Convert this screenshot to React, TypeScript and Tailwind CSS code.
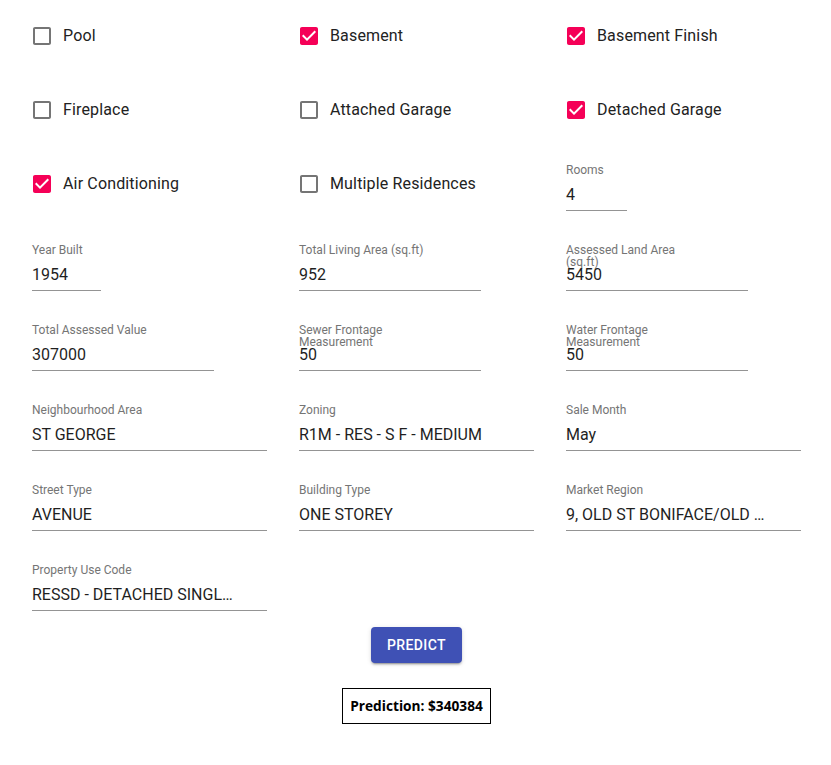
import React from "react";

const CHECKED =
  "M19 3H5c-1.11 0-2 .9-2 2v14c0 1.1.89 2 2 2h14c1.11 0 2-.9 2-2V5c0-1.1-.89-2-2-2zm-9 14l-5-5 1.41-1.41L10 14.17l7.59-7.59L19 8l-9 9z";
const BLANK =
  "M19 5v14H5V5h14m0-2H5c-1.11 0-2 .9-2 2v14c0 1.1.89 2 2 2h14c1.11 0 2-.9 2-2V5c0-1.1-.89-2-2-2z";

function Check({ label, checked }: { label: string; checked?: boolean }) {
  return (
    <label className="flex h-[42px] items-center -ml-[11px]">
      <span className="flex h-[42px] w-[42px] items-center justify-center">
        <svg
          viewBox="0 0 24 24"
          className={"h-6 w-6 " + (checked ? "fill-[#f50057]" : "fill-[#757575]")}
        >
          <path d={checked ? CHECKED : BLANK} />
        </svg>
      </span>
      <span className="text-[16px] leading-[1.5] tracking-[0.00938em] text-[#222222]">{label}</span>
    </label>
  );
}

function Field({
  label,
  value,
  width,
}: {
  label: string;
  value: string;
  width: string;
}) {
  return (
    <div className={"flex h-12 flex-col " + width}>
      <div className="h-4">
        <div className="max-w-[136px] pt-[0.5px] text-[12px] leading-[12px] text-[#757575]">
          {label}
        </div>
      </div>
      <div className="flex h-8 items-start border-b border-[#949494] pt-[6px]">
        <span className="whitespace-nowrap text-[16px] leading-[19px] text-[#1f1f1f]">{value}</span>
      </div>
    </div>
  );
}

export default function App() {
  return (
    <div className="min-h-[765px] w-[831px] bg-white pt-[15px] pl-8 font-['Roboto',sans-serif]">
      <div className="grid grid-cols-[235px_235px_235px] items-start gap-x-8 gap-y-8">
        <Check label="Pool" />
        <Check label="Basement" checked />
        <Check label="Basement Finish" checked />

        <Check label="Fireplace" />
        <Check label="Attached Garage" />
        <Check label="Detached Garage" checked />

        <Check label="Air Conditioning" checked />
        <Check label="Multiple Residences" />
        <Field label="Rooms" value="4" width="w-[61px]" />

        <Field label="Year Built" value="1954" width="w-[69px]" />
        <Field label="Total Living Area (sq.ft)" value="952" width="w-[182px]" />
        <Field label="Assessed Land Area (sq.ft)" value="5450" width="w-[182px]" />

        <Field label="Total Assessed Value" value="307000" width="w-[182px]" />
        <Field label="Sewer Frontage Measurement" value="50" width="w-[182px]" />
        <Field label="Water Frontage Measurement" value="50" width="w-[182px]" />

        <Field label="Neighbourhood Area" value="ST GEORGE" width="w-[235px]" />
        <Field label="Zoning" value="R1M - RES - S F - MEDIUM" width="w-[235px]" />
        <Field label="Sale Month" value="May" width="w-[235px]" />

        <Field label="Street Type" value="AVENUE" width="w-[235px]" />
        <Field label="Building Type" value="ONE STOREY" width="w-[235px]" />
        <Field label="Market Region" value="9, OLD ST BONIFACE/OLD …" width="w-[235px]" />

        <Field label="Property Use Code" value="RESSD - DETACHED SINGL…" width="w-[235px]" />
      </div>

      <div className="-ml-[30px] flex flex-col items-center pt-[16px]">
        <button className="flex h-9 w-[91px] items-center justify-center rounded bg-[#3f51b5] text-[14px] font-medium uppercase tracking-[0.02857em] text-white shadow-[0_3px_1px_-2px_rgba(0,0,0,0.2),0_2px_2px_0_rgba(0,0,0,0.14),0_1px_5px_0_rgba(0,0,0,0.12)]">
          Predict
        </button>
        <div className="mt-[25px] flex h-9 w-[149px] items-center justify-center border border-black font-['Open_Sans',sans-serif] text-[13.7px] font-bold text-black">
          Prediction: $340384
        </div>
      </div>
    </div>
  );
}
